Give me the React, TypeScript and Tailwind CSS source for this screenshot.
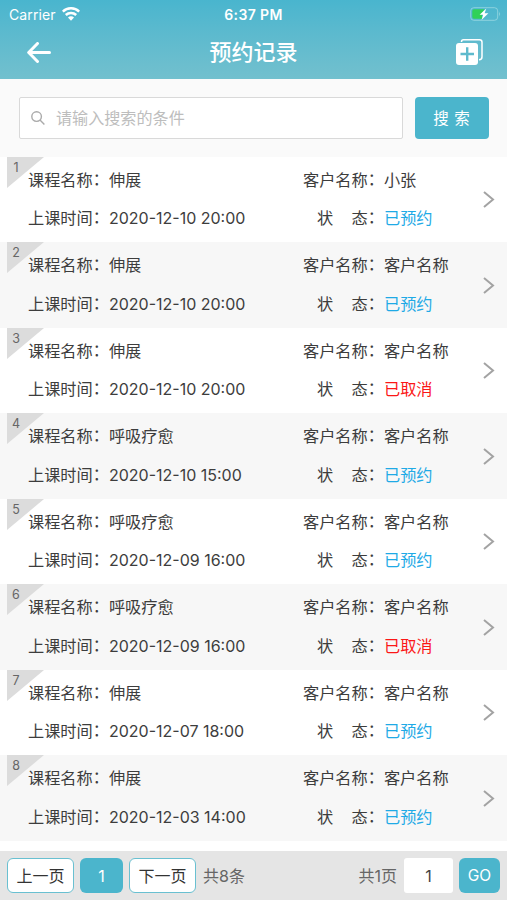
import React from "react";

type Booking = { course: string; time: string; customer: string; cancelled?: boolean };

const bookings: Booking[] = [
  { course: "伸展", time: "2020-12-10 20:00", customer: "小张" },
  { course: "伸展", time: "2020-12-10 20:00", customer: "客户名称" },
  { course: "伸展", time: "2020-12-10 20:00", customer: "客户名称", cancelled: true },
  { course: "呼吸疗愈", time: "2020-12-10 15:00", customer: "客户名称" },
  { course: "呼吸疗愈", time: "2020-12-09 16:00", customer: "客户名称" },
  { course: "呼吸疗愈", time: "2020-12-09 16:00", customer: "客户名称", cancelled: true },
  { course: "伸展", time: "2020-12-07 18:00", customer: "客户名称" },
  { course: "伸展", time: "2020-12-03 14:00", customer: "客户名称" },
];

function Colon() {
  return <span className="-mt-px">：</span>;
}

function StatusBar() {
  return (
    <div className="grid h-7 grid-cols-3 items-center text-[14px]">
      <div className="flex items-center gap-[6px] pl-[9px]">
        <span className="tracking-[0.1px]">Carrier</span>
        <svg className="h-[14px] w-[18px]" viewBox="0 0 18 14" fill="none" stroke="white" strokeWidth="2.5">
          <path d="M.8 4.6a11.7 11.7 0 0 1 16.4 0M3.8 8a7.5 7.5 0 0 1 10.4 0" />
          <path d="M6 10.6a4.2 4.2 0 0 1 6 0L9 13.7Z" fill="white" stroke="none" />
        </svg>
      </div>
      <span className="text-center font-semibold tracking-[0.4px]">6:37 PM</span>
      <svg className="mr-[6px] h-[14px] w-[31px] justify-self-end" viewBox="0 0 31 14">
        <rect x=".7" y=".7" width="27" height="12.6" rx="3.2" fill="none" stroke="#a0dbe3" strokeOpacity=".75" />
        <path d="M29.3 4.6q1.6 2.4 0 4.8Z" fill="#a0dbe3" />
        <path d="M4 2.3h10.5l-3 4.8 1.2 4.6H4q-1.7 0-1.7-1.7V4q0-1.7 1.7-1.7Z" fill="#30d158" />
        <path d="m16.3 1.4-6.7 6.4h3.6L11.5 13l6.9-6.8h-3.8Z" fill="white" />
      </svg>
    </div>
  );
}

function Row({ item, index }: { item: Booking; index: number }) {
  return (
    <li className={`relative flex h-[85.5px] items-start pl-[28px] pt-[11px] ${index % 2 ? "bg-[#f7f7f7]" : "bg-white"}`}>
      <svg className="absolute left-[7px] top-0 h-[31px] w-[37px]" viewBox="0 0 37 31">
        <path d="M0 0h37L0 31Z" fill="#dcdcdc" />
      </svg>
      <span className="absolute left-[7px] top-[3px] w-[18px] text-center text-[12.5px] leading-4 text-[#666]">{index + 1}</span>
      <div className="w-[275px] text-[16.2px] leading-6">
        <p className="flex h-6">课程名称<Colon />{item.course}</p>
        <p className="mt-[14.5px] flex h-6">上课时间<Colon /><span className="text-[16px]">{item.time}</span></p>
      </div>
      <div className="w-[160px] text-[16.2px] leading-6">
        <p className="flex h-6">客户名称<Colon />{item.customer}</p>
        <p className="mt-[14.5px] flex h-6">
          <span className="ml-[14px] mr-[18.4px]">状</span>态<Colon />
          <span className={item.cancelled ? "text-[#fb1717]" : "text-[#1faae6]"}>{item.cancelled ? "已取消" : "已预约"}</span>
        </p>
      </div>
      <svg className="ml-5 mt-[23.5px] h-[17px] w-3 shrink-0" viewBox="0 0 12 17" fill="none" stroke="#a3a3a3" strokeWidth="2">
        <path d="m1 1 9 7.5L1 16" />
      </svg>
    </li>
  );
}

export default function App() {
  return (
    <div lang="zh-CN" className="flex h-[900px] w-[507px] flex-col overflow-hidden whitespace-nowrap bg-white font-['Inter','Noto_Sans_CJK_SC',sans-serif] text-[#3d3d3d]">
      <header className="h-[79px] shrink-0 bg-linear-to-b from-[#49b5ce] to-[#72c0ce] text-white">
        <StatusBar />
        <div className="grid h-[48px] grid-cols-3 items-center">
          <svg className="ml-[27px] h-[21px] w-6" viewBox="0 0 24 21" fill="none" stroke="white" strokeWidth="3" strokeLinecap="round" strokeLinejoin="round">
            <path d="M10.5 1.5 1.7 10.5l8.8 9M2 10.5h20.5" />
          </svg>
          <h1 className="text-center text-[22px] font-medium leading-7">预约记录</h1>
          <svg className="mr-[24px] h-[26px] w-[27px] justify-self-end" viewBox="0 0 27 26">
            <path d="M5.5 3V2.8q0-2 2-2h16q2.5 0 2.5 2.5v14.4q0 3-3 3" fill="none" stroke="white" strokeWidth="1.5" />
            <rect x="0" y="4" width="22" height="22" rx="3" fill="white" />
            <path d="M4.5 15h13.5M11.2 8.3v13.4" stroke="#5ebacd" strokeWidth="2.4" />
          </svg>
        </div>
      </header>
      <section className="flex h-[77.5px] shrink-0 items-start gap-3 bg-[#fafafa] pl-[19px] pt-[18px]">
        <div className="flex h-[42px] w-[384px] items-center gap-[11px] rounded-[2px] border border-[#d9d9d9] bg-white pl-[11px]">
          <svg className="h-[14px] w-[14px]" viewBox="0 0 14 14" fill="none" stroke="#aaa" strokeWidth="1.4">
            <circle cx="5.6" cy="5.6" r="4.8" /><path d="m9 9 4.4 4.4" />
          </svg>
          <span className="text-[16.1px] leading-6 text-[#bdbdbd]">请输入搜索的条件</span>
        </div>
        <button className="h-[42px] w-[74px] rounded-[4px] bg-[#4bb5cc] pr-px pt-px text-[15.5px] text-white [word-spacing:1px]">搜 索</button>
      </section>
      <ul className="shrink-0">
        {bookings.map((item, i) => <Row key={i} item={item} index={i} />)}
      </ul>
      <footer className="mt-[10.5px] flex h-[49px] shrink-0 items-center bg-[#e5e5e5] px-[7px] text-[16px] text-[#666]">
        <button className="h-[35px] w-[67px] rounded-[6px] border border-[#69c0d1] bg-white text-[#333]">上一页</button>
        <button className="ml-[6px] h-[35px] w-[43px] rounded-[6px] bg-[#4bb5cc] text-white">1</button>
        <button className="ml-[6px] h-[35px] w-[67px] rounded-[6px] border border-[#69c0d1] bg-white text-[#333]">下一页</button>
        <span className="ml-[7px]">共8条</span>
        <span className="ml-auto">共1页</span>
        <span className="ml-[7px] flex h-[35px] w-[49px] items-center justify-center rounded-[3px] bg-white text-[#444]">1</span>
        <button className="ml-[6px] h-[35px] w-[41px] rounded-[6px] bg-[#4bb5cc] text-[15.5px] text-white">GO</button>
      </footer>
    </div>
  );
}
